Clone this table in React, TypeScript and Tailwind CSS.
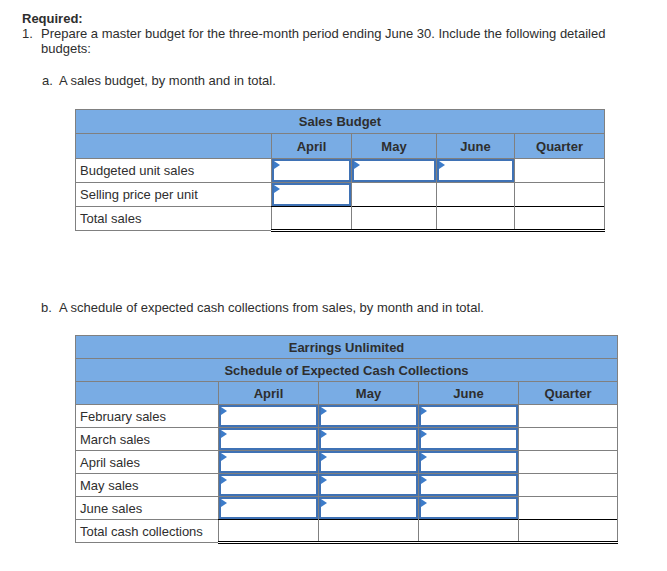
import React from 'react';

const HEAD_BG = 'bg-[#79ace4]';
const GRID = 'border border-[#808080]';

// blue editable cell with the little marker in the top left corner
const InputCell = ({ h }: { h: string }) => (
    <td className={`${GRID} p-0`}>
        <div className={`relative ${h} border-2 border-[#3f72b5] bg-white`}>
            <div className="absolute left-0 top-0 w-0 h-0 border-y-[4px] border-y-transparent border-l-[6px] border-l-[#3d7cc9]" />
        </div>
    </td>
);

const PlainCell = ({ h }: { h: string }) => <td className={`${GRID} p-0 ${h}`} />;

const TotalCell = ({ h }: { h: string }) => (
    <td className={`p-0 ${h} border-double border-x border-x-[#808080] border-t border-t-black border-b-[3px] border-b-black`} />
);

const SALES_ROWS = [
    { label: 'Budgeted unit sales', inputs: [true, true, true, false] },
    { label: 'Selling price per unit', inputs: [true, false, false, false] },
];

const CASH_ROWS = ['February sales', 'March sales', 'April sales', 'May sales', 'June sales'];

export default function App() {
    return (
        <div className="min-h-screen bg-white text-[#2e2e2e] font-['Liberation_Sans',Arial,sans-serif] text-[13px] leading-[15px]">
            <div className="pl-[22px] pt-[11px] w-[640px]">
                <p className="font-bold">Required:</p>
                <div className="flex">
                    <span className="w-[19px] shrink-0">1.</span>
                    <p>Prepare a master budget for the three-month period ending June 30. Include the following detailed budgets:</p>
                </div>

                <div className="flex mt-[17px] pl-[20px]">
                    <span className="w-[17px] shrink-0">a.</span>
                    <p>A sales budget, by month and in total.</p>
                </div>
            </div>

            {/* Sales budget */}
            <div className="pl-[75px] mt-[21px]">
                <table className={`table-fixed border-collapse ${GRID} w-[529px]`}>
                    <colgroup>
                        <col className="w-[196px]" />
                        <col className="w-[80px]" />
                        <col className="w-[85px]" />
                        <col className="w-[78px]" />
                        <col className="w-[90px]" />
                    </colgroup>
                    <tbody>
                        <tr className={HEAD_BG}>
                            <td colSpan={5} className={`${GRID} h-[24px] p-0 text-center font-bold`}>Sales Budget</td>
                        </tr>
                        <tr className={HEAD_BG}>
                            <td className={`${GRID} h-[25px] p-0`} />
                            {['April', 'May', 'June', 'Quarter'].map((m) => (
                                <td key={m} className={`${GRID} p-0 text-center font-bold`}>{m}</td>
                            ))}
                        </tr>
                        {SALES_ROWS.map((row) => (
                            <tr key={row.label}>
                                <td className={`${GRID} h-[24px] px-[4px] py-0`}>{row.label}</td>
                                {row.inputs.map((isInput, i) =>
                                    isInput ? <InputCell key={i} h="h-[23px]" /> : <PlainCell key={i} h="h-[24px]" />
                                )}
                            </tr>
                        ))}
                        <tr>
                            <td className={`${GRID} h-[24px] px-[4px] py-0`}>Total sales</td>
                            <TotalCell h="h-[24px]" />
                            <TotalCell h="h-[24px]" />
                            <TotalCell h="h-[24px]" />
                            <TotalCell h="h-[24px]" />
                        </tr>
                    </tbody>
                </table>
            </div>

            <div className="flex mt-[68px] pl-[41px]">
                <span className="w-[18px] shrink-0">b.</span>
                <p>A schedule of expected cash collections from sales, by month and in total.</p>
            </div>

            {/* Cash collections */}
            <div className="pl-[75px] mt-[20px] pb-[20px]">
                <table className={`table-fixed border-collapse ${GRID} w-[542px]`}>
                    <colgroup>
                        <col className="w-[143px]" />
                        <col className="w-[100px]" />
                        <col className="w-[100px]" />
                        <col className="w-[100px]" />
                        <col className="w-[99px]" />
                    </colgroup>
                    <tbody>
                        <tr className={HEAD_BG}>
                            <td colSpan={5} className={`${GRID} h-[23px] p-0 text-center font-bold`}>Earrings Unlimited</td>
                        </tr>
                        <tr className={HEAD_BG}>
                            <td colSpan={5} className={`${GRID} h-[23px] p-0 text-center font-bold`}>Schedule of Expected Cash Collections</td>
                        </tr>
                        <tr className={HEAD_BG}>
                            <td className={`${GRID} h-[23px] p-0`} />
                            {['April', 'May', 'June', 'Quarter'].map((m) => (
                                <td key={m} className={`${GRID} p-0 text-center font-bold`}>{m}</td>
                            ))}
                        </tr>
                        {CASH_ROWS.map((label) => (
                            <tr key={label}>
                                <td className={`${GRID} h-[23px] px-[4px] py-0`}>{label}</td>
                                <InputCell h="h-[22px]" />
                                <InputCell h="h-[22px]" />
                                <InputCell h="h-[22px]" />
                                <PlainCell h="h-[23px]" />
                            </tr>
                        ))}
                        <tr>
                            <td className={`${GRID} h-[23px] px-[4px] py-0`}>Total cash collections</td>
                            <TotalCell h="h-[23px]" />
                            <TotalCell h="h-[23px]" />
                            <TotalCell h="h-[23px]" />
                            <TotalCell h="h-[23px]" />
                        </tr>
                    </tbody>
                </table>
            </div>
        </div>
    );
}
